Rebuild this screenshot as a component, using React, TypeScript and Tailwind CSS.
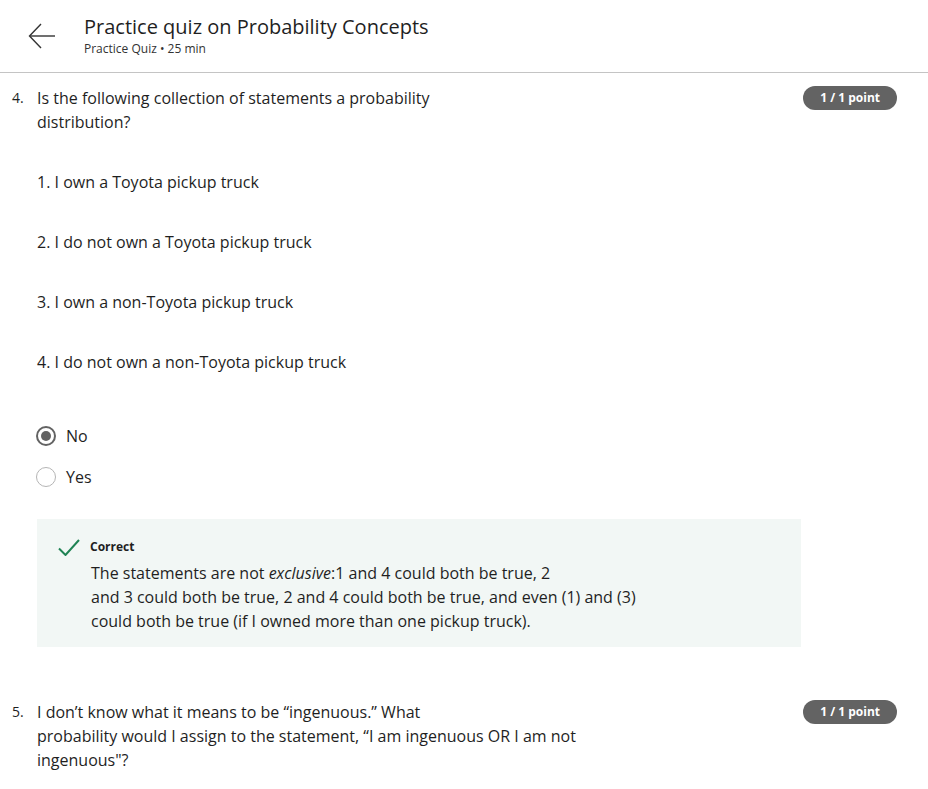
import { useState } from "react";

const STATEMENTS = [
  "1. I own a Toyota pickup truck",
  "2. I do not own a Toyota pickup truck",
  "3. I own a non-Toyota pickup truck",
  "4. I do not own a non-Toyota pickup truck",
];

function PointBadge() {
  return (
    <span className="flex h-6 shrink-0 items-center rounded-full bg-[#636363] px-[17px] text-[12px] font-bold leading-[18px] text-white">
      1 / 1 point
    </span>
  );
}

function Radio({ checked }: { checked: boolean }) {
  return (
    <span
      className={
        checked
          ? "flex h-5 w-5 items-center justify-center rounded-full border-2 border-[#636363]"
          : "flex h-5 w-5 items-center justify-center rounded-full border border-[#b5b5b5]"
      }
    >
      {checked && <span className="h-[10px] w-[10px] rounded-full bg-[#636363]" />}
    </span>
  );
}

export default function App() {
  const [answer, setAnswer] = useState("No");

  return (
    <div className="min-h-screen bg-white font-['Open_Sans',sans-serif] text-[#1f1f1f]">
      {/* Header */}
      <header className="flex h-[73px] items-start border-b border-[#c4c4c4] pl-[28px] pt-[14px]">
        <button className="mt-[8px] text-[#333]">
          <svg width="28" height="28" viewBox="0 0 28 28" fill="none" stroke="currentColor" strokeWidth="1.4">
            <path d="M27 14H2" />
            <path d="M13 2 1.5 14 13 26" />
          </svg>
        </button>
        <div className="ml-[28px]">
          <h1 className="text-[20px] leading-[26px] text-[#1f1f1f]">
            Practice quiz on Probability Concepts
          </h1>
          <p className="mt-[1px] text-[12px] leading-[16px] text-[#333]">Practice Quiz • 25 min</p>
        </div>
      </header>

      {/* Question 4 */}
      <section className="pl-[12px] pr-[31px] pt-[13px]">
        <div className="flex items-start">
          <span className="w-[25px] pt-[1px] text-[14px] leading-[22px]">4.</span>
          <p className="w-[420px] text-[16px] leading-[24px]">
            Is the following collection of statements a probability distribution?
          </p>
          <div className="ml-auto">
            <PointBadge />
          </div>
        </div>

        <div className="ml-[25px] mt-[36px] flex flex-col gap-[36px]">
          {STATEMENTS.map((s) => (
            <p key={s} className="text-[16px] leading-[24px]">
              {s}
            </p>
          ))}
        </div>

        <div className="ml-[24px] mt-[50px] flex flex-col gap-[17px]">
          {["No", "Yes"].map((opt) => (
            <label
              key={opt}
              className="flex cursor-pointer items-center gap-[10px]"
              onClick={() => setAnswer(opt)}
            >
              <Radio checked={answer === opt} />
              <span className="text-[16px] leading-[24px]">{opt}</span>
            </label>
          ))}
        </div>

        {/* Feedback */}
        <div className="ml-[25px] mt-[30px] w-[764px] bg-[#f2f7f5] pb-[14px] pl-[21px] pt-[19px]">
          <div className="flex items-center gap-[10px]">
            <svg width="22" height="17" viewBox="0 0 22 17" fill="none" stroke="#1f8354" strokeWidth="2">
              <path d="M1 9.5 7.5 16 21 1" />
            </svg>
            <span className="text-[12px] font-bold leading-[18px]">Correct</span>
          </div>
          <p className="ml-[33px] mt-[5px] w-[580px] text-[16px] leading-[24px]">
            The statements are not <em>exclusive</em>:1 and 4 could both be true, 2
            <br />
            and 3 could both be true, 2 and 4 could both be true, and even (1) and (3)
            <br />
            could both be true (if I owned more than one pickup truck).
          </p>
        </div>

        {/* Question 5 */}
        <div className="mt-[53px] flex items-start">
          <span className="w-[25px] pt-[1px] text-[14px] leading-[22px]">5.</span>
          <p className="w-[560px] text-[16px] leading-[24px]">
            I don’t know what it means to be “ingenuous.” What
            <br />
            probability would I assign to the statement, “I am ingenuous OR I am not
            ingenuous"?
          </p>
          <div className="ml-auto">
            <PointBadge />
          </div>
        </div>
      </section>
    </div>
  );
}
